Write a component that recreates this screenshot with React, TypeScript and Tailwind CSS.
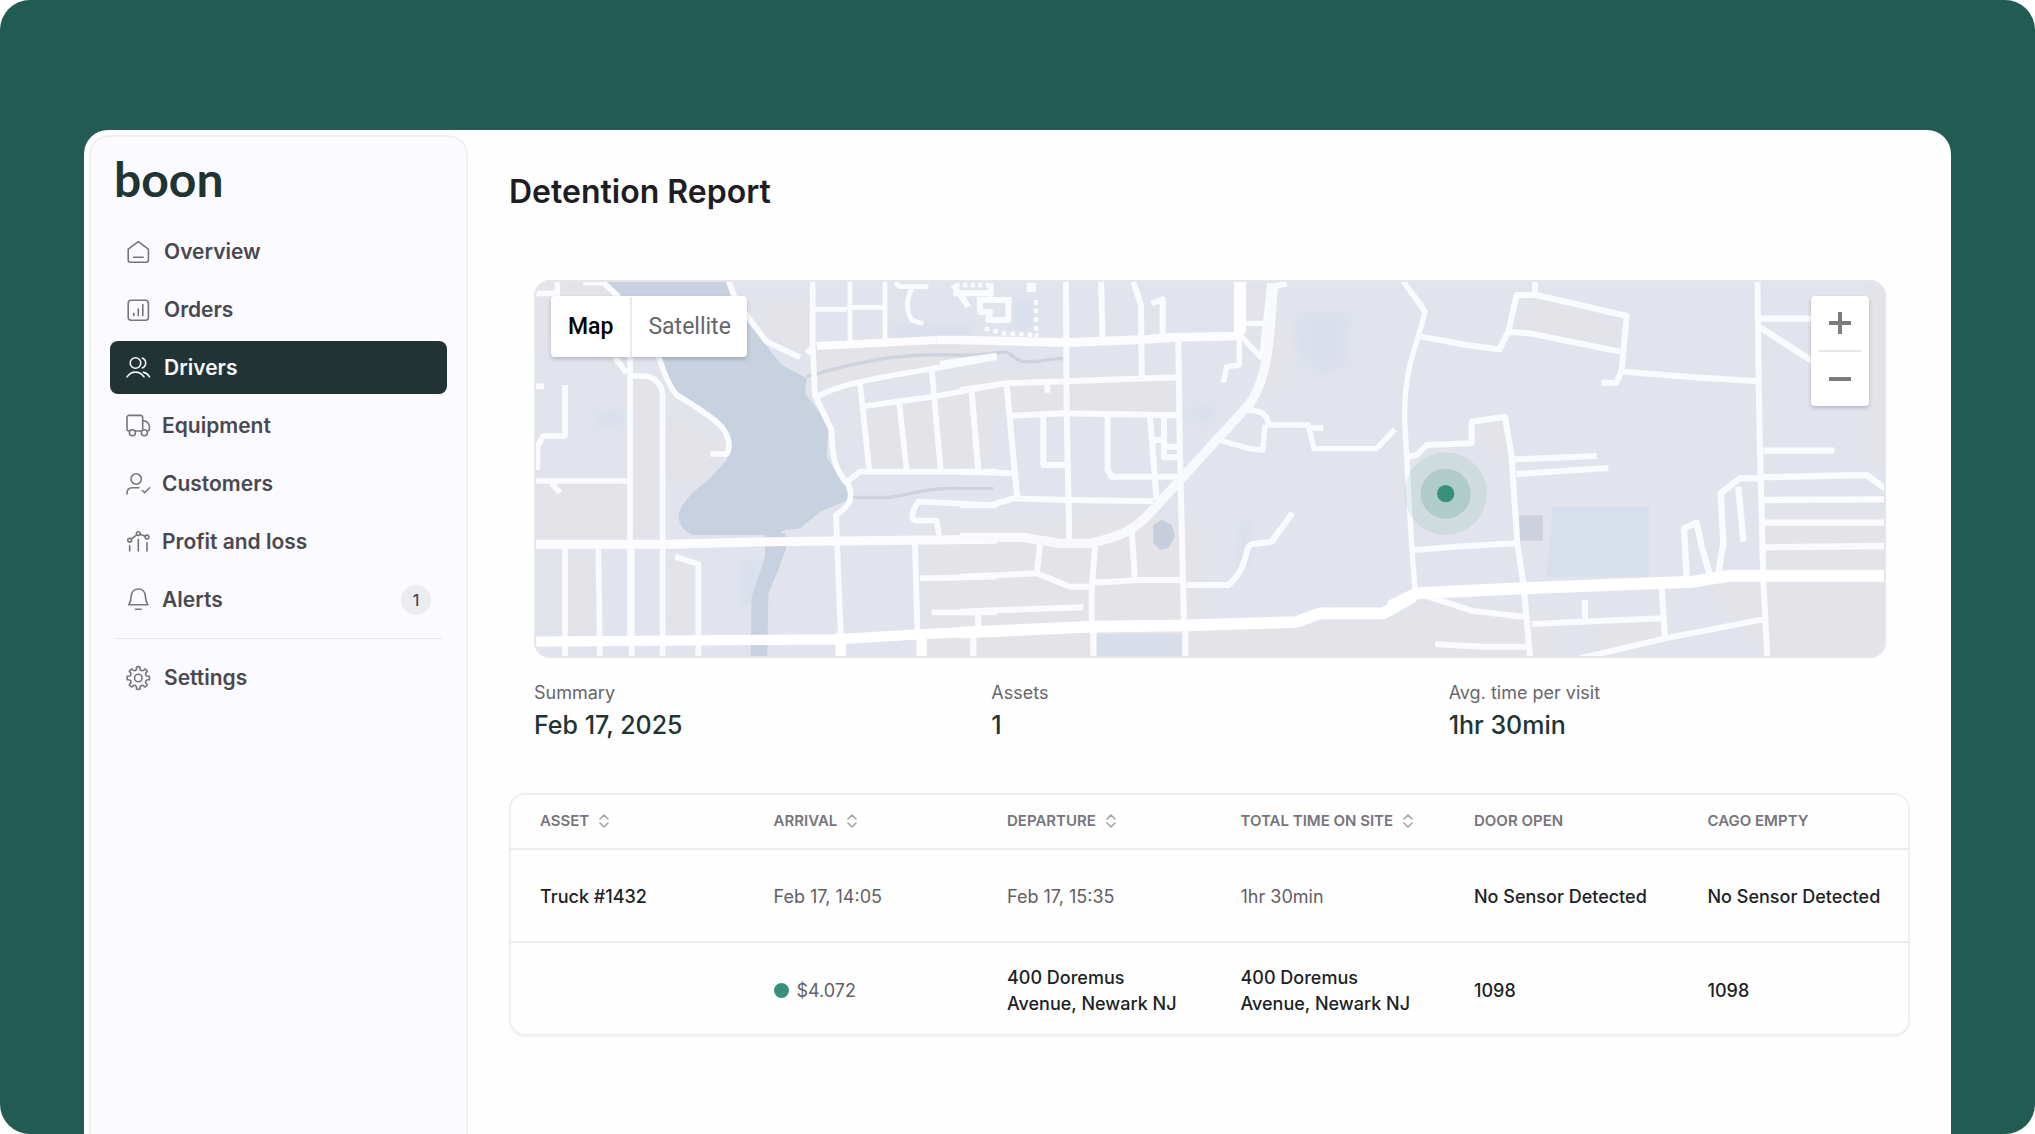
import type { ReactNode } from "react";

const gearPath = (() => {
  const at = (radius: number, degrees: number) => {
    const a = (degrees * Math.PI) / 180;
    return `${(12.3 + radius * Math.cos(a)).toFixed(2)} ${(12 + radius * Math.sin(a)).toFixed(2)}`;
  };
  let d = `M${at(11.2, -9)}`;
  for (let k = 0; k < 8; k++) {
    const t = k * 45;
    d += `Q${at(11.6, t)} ${at(11.2, t + 9)}C${at(7.2, t + 10)} ${at(7.2, t + 35)} ${at(11.2, t + 36)}`;
  }
  return d + "Z";
})();

const icons: Record<string, ReactNode> = {
  home: (
    <>
      <path d="M2.2 9.2 12.3 1.6l10.1 7.6v10.9a2.2 2.2 0 0 1-2.2 2.2H4.4a2.2 2.2 0 0 1-2.2-2.2Z" />
      <path d="M7.6 17.3h9.6" />
    </>
  ),
  orders: (
    <>
      <rect x="2.2" y="2.2" width="20.2" height="20" rx="3" />
      <path d="M7.8 15.2v2.4M12.3 11v6.6M16.8 6.6v11" />
    </>
  ),
  drivers: (
    <>
      <circle cx="9.5" cy="7" r="5.3" />
      <path d="M16.3 2a5.4 5.4 0 0 1 0 10M1 20.9c4.5-6.4 12.5-6.4 17 0M17.4 16.4c2.6.5 4.6 2 6.1 4.5" />
    </>
  ),
  truck: (
    <>
      <path d="M3.4 17H3a2 2 0 0 1-2-2V3.4a2 2 0 0 1 2-2h11.7a2 2 0 0 1 2 2V15M9.4 17h6M16.7 6.8h1c3.4.6 5.6 3 5.7 6.4V15a2 2 0 0 1-2 2" />
      <circle cx="6.4" cy="18.8" r="3" />
      <circle cx="18.4" cy="18.8" r="3" />
    </>
  ),
  customers: (
    <>
      <circle cx="10.2" cy="7" r="5.2" />
      <path d="M1 22v-1.3a5 5 0 0 1 5-5h7M16.3 18.5l2.4 2.2 4.9-4.9" />
    </>
  ),
  profit: (
    <>
      <circle cx="3.7" cy="10.2" r="1.9" />
      <circle cx="12.3" cy="3.6" r="1.9" />
      <circle cx="21" cy="7" r="1.9" />
      <path d="m5.2 9 5.6-4.2M14.1 4.3l5.1 2M3.7 15.7v5.2M12.3 9.2v11.7M21 12.7v8.2" />
    </>
  ),
  bell: (
    <>
      <path d="M12.3 1c-3.9 0-6.7 2.9-7 6.6-.2 4.3-.8 6.2-2.5 9.2h19c-1.7-3-2.3-4.9-2.5-9.2-.3-3.7-3.1-6.6-7-6.6Z" />
      <path d="M9.5 21.3h5.6" />
    </>
  ),
  gear: (
    <>
      <path d={gearPath} />
      <circle cx="12.3" cy="12" r="3.8" />
    </>
  ),
};

function NavIcon({ name }: { name: string }) {
  return (
    <svg
      viewBox="0 0 24 24"
      className="h-6 w-6 shrink-0 overflow-visible"
      fill="none"
      stroke="currentColor"
      strokeWidth="1.6"
      strokeLinecap="round"
      strokeLinejoin="round"
      aria-hidden="true"
    >
      {icons[name]}
    </svg>
  );
}

type NavItemProps = {
  icon: string;
  label: string;
  active?: boolean;
  tight?: boolean;
  badge?: string;
};

function NavItem({ icon, label, active, tight, badge }: NavItemProps) {
  return (
    <a
      href="#"
      aria-current={active ? "page" : undefined}
      className={`flex h-[53px] items-center rounded-lg px-4 text-[21px] font-semibold ${
        tight ? "gap-3" : "gap-[14px]"
      } ${active ? "bg-[#203335] text-[#f7f8fb]" : "text-[#4a484e]"}`}
    >
      <span className={active ? "text-[#f2f4f4]" : "text-[#77757b]"}>
        <NavIcon name={icon} />
      </span>
      <span>{label}</span>
      {badge && (
        <span className="ml-auto flex h-[30px] w-[30px] items-center justify-center rounded-full bg-[#ececee] text-base font-medium">
          {badge}
        </span>
      )}
    </a>
  );
}

/* Map artwork. Drawn on a 4056 x 1134 board made of three tiles. */
function MapArt() {
  return (
    <svg
      viewBox="0 0 4056 1134"
      preserveAspectRatio="xMidYMid slice"
      className="absolute inset-0 h-full w-full"
      fill="none"
      strokeLinejoin="round"
      aria-hidden="true"
    >
      <defs>
        <filter id="soft" x="-20%" y="-20%" width="140%" height="140%">
          <feGaussianBlur stdDeviation="14" />
        </filter>
        <filter id="edge">
          <feGaussianBlur stdDeviation="2" />
        </filter>
      </defs>
      <rect width="4056" height="1134" fill="#e1e4ec" />

      <g fill="#e3e3e8" filter="url(#soft)">
        <path d="M0 0H200L280 240V770H0V600H280V300L180 200H0ZM290 290H370V770H290ZM400 830H480V1060H400ZM60 830H180V1070H60Z" />
        <path d="M400 400 560 480 520 620 400 600ZM660 60H830V220L720 190ZM980 400 1360 330V560H1010ZM1170 730H2000V1130H1170ZM850 200 1360 170V240L860 340Z" />
        <path d="M1270 280H1900V400H1270ZM1620 700H1900L1740 780H1620ZM2140 20H2190V130H2140ZM1960 1040 2700 1000V1134H1960ZM1700 920H1930V1010H1700Z" />
        <path d="M2640 960 3080 1000V1134H2640ZM3000 60 3240 120V190L2950 150ZM3500 900H4056V1134H3700ZM3700 700H4056V870H3700ZM3170 1040 3400 1020V1080L3200 1134Z" />
        <path d="M2850 430H2920V560L2830 480ZM4010 0H4056V560H4010ZM2200 120 2290 160 2240 330 2190 340Z" />
      </g>
      <g fill="#d7dfec" filter="url(#soft)" opacity="0.8">
        <path d="M2290 100H2450L2440 250 2360 290 2290 230ZM1970 370H2040V430H1970ZM1070 130H1320V175H1070ZM1430 60H1500V150H1430ZM2120 720H2150V860H2110ZM620 840H680V980H620ZM180 390H270V440H180Z" />
      </g>
      <path d="M3056 680H3346V890H3038Z" fill="#d8dfec" filter="url(#edge)" />
      <path d="M2956 706H3026V782H2956Z" fill="#cdd1dd" filter="url(#edge)" />
      <path d="M1690 1062H1944V1134H1690Z" fill="#d7dee9" />

      {/* West tile: lake, creeks and residential grid */}
      <g transform="translate(-12 -30)">
        <g fill="#c8d1df">
          <path d="M225 30H595L650 140 700 215 755 285 830 325 825 370 870 430 895 480 890 560 920 610 955 655 955 690 870 725 810 775 765 780 740 795H490Q450 780 445 740 445 720 465 695 490 660 530 635L590 570 600 520 590 480 530 430 445 375 410 320 390 260 300 100Z" />
          <path d="M705 790H765L770 830 745 900 715 970 712 1165H662L665 980 705 860Z" />
        </g>
        <g stroke="#cdd2dd" strokeWidth="10">
          <path d="M830 320C1000 270 1120 250 1270 255S1420 230 1450 260 1540 267 1600 265" />
          <path d="M950 682H1080C1180 665 1200 652 1300 656H1390" />
        </g>
        <g stroke="#fafbfe" strokeWidth="17">
          <path d="M82 30V90M15 70H90M160 38H220L265 80M105 345V498H40L22 530V600M15 349H42M15 633H300M255 262 290 310M65 640 90 668" />
          <path d="M300 260V1100M300 318H345Q395 325 398 380V1160M385 255Q410 340 440 375 540 435 575 470 610 520 590 552H540" />
          <path d="M595 30 615 85 660 150 710 215 810 262M830 250 850 230M848 30V230L855 375 905 480C905 560 915 600 955 645 975 690 950 715 918 735L935 1165" />
          <path d="M850 118H950M960 35V215M1065 35V210M950 112H1070M1095 38 1110 50H1195M1145 55Q1120 110 1145 150L1180 162" strokeWidth="14" />
          <path d="M865 378C960 325 1180 305 1400 262M990 340 1018 600M1005 408 1210 380 1400 345M1205 298 1232 600M1108 400 1130 600M1325 370 1345 600M955 632 990 605H1400" />
          <path d="M1400 706 1165 695Q1135 740 1155 752H1220L1228 800M105 830V1160M205 830 210 1160M305 830V1160M435 860 505 882V1160M1155 820 1162 1080M1170 925 1400 920M1205 1027H1400M1345 1030V1080M1330 1100V1165" />
        </g>
        <path d="M15 823H420L720 815 1400 808" stroke="#fcfcfe" strokeWidth="27" />
        <path d="M15 1115 920 1108 1150 1094 1400 1082M932 1090V1165M1175 1080V1165" stroke="#ffffff" strokeWidth="31" />
      </g>

      {/* Centre tile: curved avenue and blocks */}
      <g transform="translate(1278 -30)">
        <path d="M580 765 605 750 635 765 645 800 625 835 600 840 580 820Z" fill="#c6cedb" />
        <g stroke="#fafbfe" strokeWidth="18">
          <path d="M318 35 320 420 328 815M423 35 428 215M520 35 543 105 545 320M575 100 608 88V200M655 210 660 560 672 1060M0 360 140 340 420 330 650 322M140 345 160 560 172 685M155 437 310 430 650 436M250 440V585H325M443 440V600L455 620H660M570 440 590 690M612 440V562H660M578 510H610M615 530H655M262 345V368" />
          <path d="M35 365 55 605M0 605 160 610M0 706H90L160 685 330 690 580 694M0 920 230 910 330 950H392M240 820 230 915M405 830 395 960V1060M515 780 525 930M400 938 535 930H665M680 945H805C870 890 850 830 875 823L935 815 998 728M0 1025 130 1020 370 1012" />
          <path d="M845 200 905 265M838 200V285L800 290 790 338M855 160H918M905 265 930 40M860 420Q925 420 925 465H1045L1062 536H1250L1305 478M1045 474H1090M915 465 908 540 870 536 775 510M1330 35 1390 115" strokeWidth="16" />
          <path d="M55 1025V1080M40 1095V1165M400 1080V1165M676 1080V1165M940 50 980 40" />
        </g>
        <g stroke="#fafbfe" strokeWidth="13">
          <path d="M-20 45 25 110M-20 70H90M92 40V80M50 90H155M60 90V125H90L85 150H145V90" strokeWidth="18" />
          <path d="M75 175 130 190 235 195M228 90V200" strokeDasharray="14 12" />
          <path d="M-15 45H90" strokeDasharray="14 9" />
          <path d="M200 52H228" strokeWidth="28" />
        </g>
        <path d="M-70 210H0L320 218 560 208 640 202 840 198M838 35V205" stroke="#fcfcfe" strokeWidth="26" />
        <path d="M840 35V190" stroke="#fdfdff" strokeWidth="36" />
        <path d="M-430 228 -70 210" stroke="#fcfcfe" strokeWidth="24" />
        <path d="M0 802H190L300 820H390C480 800 520 780 560 740L870 400C925 320 930 200 940 40" stroke="#f8f9fd" strokeWidth="28" />
        <path d="M-60 283 110 258" stroke="#fafbfe" strokeWidth="20" />
        <path d="M0 1088 400 1070 680 1066 1010 1056 1080 1030H1270L1360 980" stroke="#ffffff" strokeWidth="35" />
      </g>

      {/* East tile: industrial blocks */}
      <g transform="translate(2598 -30)">
        <g stroke="#fafbfe" strokeWidth="18">
          <path d="M10 35 75 125 55 200C20 300 10 380 15 470L35 830 45 960" strokeWidth="16" />
          <path d="M62 200 200 225 298 238 325 185 350 75H410L680 138 665 300 650 338H605M405 35V75M325 185 390 190 660 245M670 305 880 322 1075 334M1072 35 1078 460 1090 930 1102 1165" />
          <path d="M1080 146H1240M1080 172 1240 275M1090 542H1303M1085 625H1020L962 670 970 820 955 910M1080 622 1400 615 1455 655M1015 650 1030 815M1090 690 1455 688M1090 758H1455M1095 832 1455 828M860 920 852 775 890 758 905 830 930 915" strokeWidth="19" />
          <path d="M20 560 50 555 80 525 215 520V455L315 440 335 560 352 820 370 940M345 568 590 558M350 612 625 594M40 840 200 828 350 820M85 980 215 1022 370 1040M372 960 390 1160M395 1062 785 1045M785 955 795 1105M555 990V1050M540 1165 795 1105 1090 1048M105 1123 250 1130H380" />
        </g>
        <path d="M-30 1010 50 970 370 955 880 935 990 917H1455" stroke="#ffffff" strokeWidth="36" />
        <g fill="#38907a">
          <circle cx="137" cy="671" r="124" opacity="0.11" />
          <circle cx="137" cy="671" r="75" opacity="0.2" />
          <circle cx="137" cy="671" r="26" />
        </g>
      </g>
      <rect x="3" y="3" width="4050" height="1128" rx="48" stroke="#e6e5ea" strokeWidth="6" />
    </svg>
  );
}

function ZoomGlyph({ plus }: { plus?: boolean }) {
  return (
    <svg viewBox="0 0 22 22" className="h-[22px] w-[22px]" stroke="#7d7b7f" strokeWidth="4" aria-hidden="true">
      <path d={plus ? "M0 11h22M11 0v22" : "M0 11h22"} />
    </svg>
  );
}

function SortIcon() {
  return (
    <svg
      viewBox="0 0 10 14"
      className="h-[14px] w-[10px]"
      fill="none"
      stroke="#a3a1a6"
      strokeWidth="1.6"
      strokeLinejoin="round"
      strokeLinecap="round"
      aria-hidden="true"
    >
      <path d="m1 5 4-4 4 4M1 9l4 4 4-4" />
    </svg>
  );
}

const stats = [
  { label: "Summary", value: "Feb 17, 2025" },
  { label: "Assets", value: "1" },
  { label: "Avg. time per visit", value: "1hr 30min" },
];

const columns = [
  { label: "ASSET", sortable: true },
  { label: "ARRIVAL", sortable: true },
  { label: "DEPARTURE", sortable: true },
  { label: "TOTAL TIME ON SITE", sortable: true },
  { label: "DOOR OPEN", sortable: false },
  { label: "CAGO EMPTY", sortable: false },
];

export default function App() {
  return (
    <div className="min-h-screen bg-white font-['Inter',sans-serif]">
      <div className="flex min-h-screen rounded-[30px] bg-[#225b52] px-[84px] pt-[130px]">
        <div className="flex min-w-0 flex-1 rounded-t-3xl bg-[#fefefe] pt-[5px] pl-[5px]">
          <aside className="w-[379px] shrink-0 rounded-t-[20px] border-2 border-b-0 border-[#f0eff3] bg-[#fbfaff] px-[19px] pt-[14px]">
            <div className="pl-1 font-['Lato',sans-serif] text-5xl leading-[56px] font-bold text-[#1f3533]">
              boon
            </div>
            <nav className="mt-[18px] flex flex-col gap-[5px]" aria-label="Main">
              <NavItem icon="home" label="Overview" />
              <NavItem icon="orders" label="Orders" />
              <NavItem icon="drivers" label="Drivers" active />
              <NavItem icon="truck" label="Equipment" tight />
              <NavItem icon="customers" label="Customers" tight />
              <NavItem icon="profit" label="Profit and loss" tight />
              <NavItem icon="bell" label="Alerts" tight badge="1" />
              <hr className="mx-[5px] my-[7px] border-[#e6e5e9]" />
              <NavItem icon="gear" label="Settings" />
            </nav>
          </aside>

          <main className="min-w-0 flex-1 px-[41px] pt-[37px]">
            <h1 className="text-[32px] leading-10 font-semibold text-[#1e1d24]">Detention Report</h1>

            <div className="mt-[68px] mr-6 ml-[25px]">
              <section className="relative h-[378px] overflow-hidden rounded-2xl" aria-label="Map">
                <MapArt />
                <div className="absolute top-4 left-[17px] flex h-[61px] divide-x-2 divide-[#ebe9ec] rounded bg-white pt-px font-['Roboto',sans-serif] text-[23px] shadow-[0_2px_4px_rgba(0,0,0,0.2)]">
                  <button type="button" className="px-[17px] font-medium text-black">
                    Map
                  </button>
                  <button type="button" className="px-4 text-[#666567]">
                    Satellite
                  </button>
                </div>
                <div className="absolute top-4 right-[17px] flex h-[110px] w-[58px] flex-col items-center rounded bg-white shadow-[0_2px_4px_rgba(0,0,0,0.2)]">
                  <button type="button" aria-label="Zoom in" className="flex flex-1 items-center">
                    <ZoomGlyph plus />
                  </button>
                  <div className="h-[2px] w-[42px] bg-[#e8e6e8]" />
                  <button type="button" aria-label="Zoom out" className="flex flex-1 items-center">
                    <ZoomGlyph />
                  </button>
                </div>
              </section>

              <dl className="mt-[21px] grid grid-cols-3 gap-5">
                {stats.map((s) => (
                  <div key={s.label}>
                    <dt className="text-[18px] leading-7 text-[#68666c]">{s.label}</dt>
                    <dd className="text-[25px] leading-9 font-medium text-[#203533]">{s.value}</dd>
                  </div>
                ))}
              </dl>
            </div>

            <div className="mt-[50px] overflow-hidden rounded-2xl shadow-[inset_0_0_0_2px_#efeef2,0_1px_2px_rgba(0,0,0,0.05)]">
              <table className="w-full table-fixed text-left text-[18px] leading-[26px]">
                <thead>
                  <tr className="h-[56px] border-b-2 border-[#ececef]">
                    {columns.map((c) => (
                      <th key={c.label} scope="col" className="pl-[31px] text-[15px] font-semibold whitespace-nowrap text-[#77757c]">
                        {c.sortable ? (
                          <button type="button" className="flex items-center gap-[10px]">
                            {c.label}
                            <SortIcon />
                          </button>
                        ) : (
                          c.label
                        )}
                      </th>
                    ))}
                  </tr>
                </thead>
                <tbody>
                  <tr className="h-[93px] border-b-2 border-[#ececef] font-medium whitespace-nowrap text-[#201f25]">
                    <td className="pt-[2px] pl-[31px]">Truck #1432</td>
                    <td className="pt-[2px] pl-[31px] font-normal text-[#626066]">Feb 17, 14:05</td>
                    <td className="pt-[2px] pl-[31px] font-normal text-[#626066]">Feb 17, 15:35</td>
                    <td className="pt-[2px] pl-[31px] font-normal text-[#626066]">1hr 30min</td>
                    <td className="pt-[2px] pl-[31px]">No Sensor Detected</td>
                    <td className="pt-[2px] pl-[31px]">No Sensor Detected</td>
                  </tr>
                  <tr className="h-[94px] font-medium text-[#201f25]">
                    <td className="pt-[2px] pl-[31px]" />
                    <td className="pt-[2px] pl-[31px] font-normal text-[#626066]">
                      <span className="flex items-center gap-2">
                        <span className="h-[15px] w-[15px] rounded-full bg-[#38907a]" />
                        $4.072
                      </span>
                    </td>
                    <td className="pt-[2px] pl-[31px]">
                      400 Doremus
                      <br />
                      Avenue, Newark NJ
                    </td>
                    <td className="pt-[2px] pl-[31px]">
                      400 Doremus
                      <br />
                      Avenue, Newark NJ
                    </td>
                    <td className="pt-[2px] pl-[31px]">1098</td>
                    <td className="pt-[2px] pl-[31px]">1098</td>
                  </tr>
                </tbody>
              </table>
            </div>
          </main>
        </div>
      </div>
    </div>
  );
}
